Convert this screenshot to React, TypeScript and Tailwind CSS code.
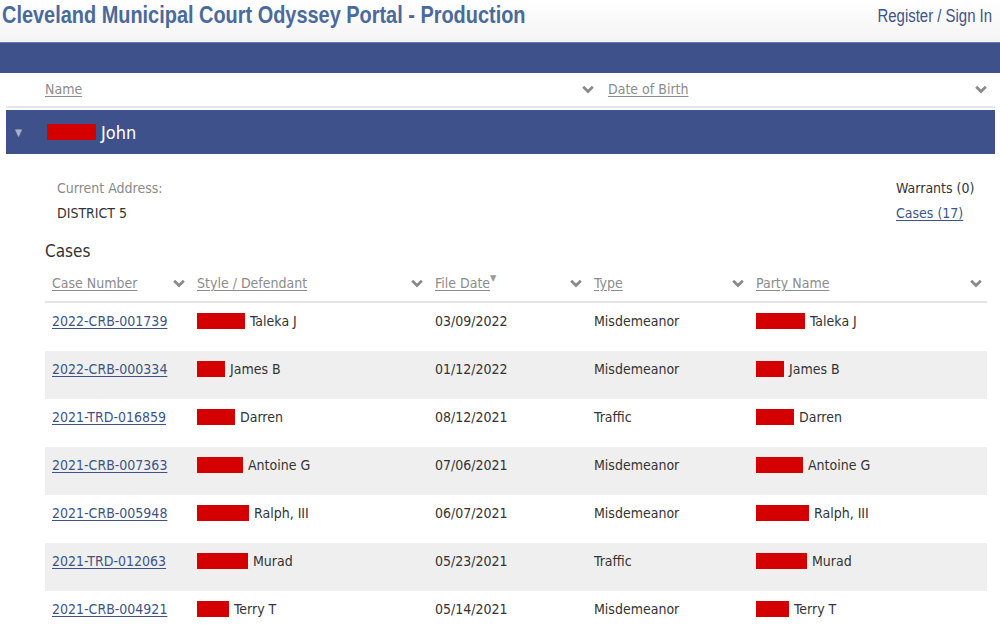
import React from 'react';

const narrow = { fontFamily: '"Liberation Sans", Arial, sans-serif' };

const Chevron = () => (
  <svg width="12" height="9" viewBox="0 0 12 9" className="shrink-0">
    <path d="M1.2 1.8 L6 6.5 L10.8 1.8" fill="none" stroke="#8a8a8a" strokeWidth="2.8" />
  </svg>
);

const Redact = ({ w }: { w: number }) => (
  <span className="inline-block h-[16px] bg-[#d40000] mr-[5px] align-middle" style={{ width: w }} />
);

interface CaseRow {
  num: string;
  styleW: number;
  styleName: string;
  date: string;
  type: string;
  partyW: number;
  partyName: string;
}

const rows: CaseRow[] = [
  { num: '2022-CRB-001739', styleW: 48, styleName: 'Taleka J', date: '03/09/2022', type: 'Misdemeanor', partyW: 49, partyName: 'Taleka J' },
  { num: '2022-CRB-000334', styleW: 28, styleName: 'James B', date: '01/12/2022', type: 'Misdemeanor', partyW: 28, partyName: 'James B' },
  { num: '2021-TRD-016859', styleW: 38, styleName: 'Darren', date: '08/12/2021', type: 'Traffic', partyW: 38, partyName: 'Darren' },
  { num: '2021-CRB-007363', styleW: 46, styleName: 'Antoine G', date: '07/06/2021', type: 'Misdemeanor', partyW: 47, partyName: 'Antoine G' },
  { num: '2021-CRB-005948', styleW: 52, styleName: 'Ralph, III', date: '06/07/2021', type: 'Misdemeanor', partyW: 53, partyName: 'Ralph, III' },
  { num: '2021-TRD-012063', styleW: 51, styleName: 'Murad', date: '05/23/2021', type: 'Traffic', partyW: 51, partyName: 'Murad' },
  { num: '2021-CRB-004921', styleW: 32, styleName: 'Terry T', date: '05/14/2021', type: 'Misdemeanor', partyW: 33, partyName: 'Terry T' },
];

const cols = 'grid grid-cols-[145px_238px_159px_162px_238px]';

const HeadCell = ({ label, sort }: { label: string; sort?: boolean }) => (
  <div className="flex items-center justify-between pl-[7px] pr-[5px]">
    <span className="flex items-start">
      <span className="underline underline-offset-2 text-[#8c8c8c]">{label}</span>
      {sort && <span className="text-[9px] text-[#9a9a9a] leading-none mt-[1px]">▼</span>}
    </span>
    <Chevron />
  </div>
);

export default function App() {
  return (
    <div
      className="w-[1000px] h-[625px] overflow-hidden bg-white text-[14px] text-[#333]"
      style={{ fontFamily: '"DejaVu Sans Condensed", Tahoma, sans-serif' }}
    >
      <header className="h-[42px] flex items-start justify-between pl-[2px] pr-[8px] bg-gradient-to-b from-white to-[#f4f4f4]">
        <h1
          className="text-[24px] font-bold text-[#4a6a9c] leading-[28px] mt-[1px] whitespace-nowrap origin-left scale-x-[0.83]"
          style={narrow}
        >
          Cleveland Municipal Court Odyssey Portal - Production
        </h1>
        <a
          className="text-[18px] text-[#3e5487] leading-[22px] mt-[5px] whitespace-nowrap origin-right scale-x-[0.83]"
          style={narrow}
        >
          Register / Sign In
        </a>
      </header>
      <div className="h-[31px] bg-[#3f518b] border-t border-[#6b7ba8]" />

      <div className="px-[6px] pr-[5px]">
        <div className="h-[35px] flex items-center border-b-[2px] border-[#e3e6ee] text-[14px]">
          <div className="w-[592px] flex items-center justify-between pl-[39px] pr-[4px]">
            <span className="underline underline-offset-2 text-[#8c8c8c]">Name</span>
            <Chevron />
          </div>
          <div className="flex-1 flex items-center justify-between pl-[10px] pr-[8px]">
            <span className="underline underline-offset-2 text-[#8c8c8c]">Date of Birth</span>
            <Chevron />
          </div>
        </div>

        <div className="mt-[2px] h-[44px] bg-[#3f518b] flex items-center text-white">
          <span className="ml-[9px] text-[10px] text-[#a9b1c9] w-[32px]">▼</span>
          <Redact w={49} />
          <span className="text-[18px]">John</span>
        </div>

        <div className="flex justify-between pl-[51px] pt-[22px]">
          <div className="leading-[25px]">
            <div className="text-[#8a8a8a]">Current Address:</div>
            <div>DISTRICT 5</div>
          </div>
          <div className="leading-[25px] w-[99px] whitespace-nowrap">
            <div>Warrants (0)</div>
            <a className="underline underline-offset-2 text-[#3e5487]">Cases (17)</a>
          </div>
        </div>

        <div className="pl-[39px] pr-[8px]">
          <div className="text-[17px] mt-[13px] leading-[24px]">Cases</div>
          <div className={`${cols} h-[33px] items-center pb-[4px] border-b-[2px] border-[#e4e4e4] mt-[7px]`}>
            <HeadCell label="Case Number" />
            <HeadCell label="Style / Defendant" />
            <HeadCell label="File Date" sort />
            <HeadCell label="Type" />
            <HeadCell label="Party Name" />
          </div>
          {rows.map((r, i) => (
            <div
              key={r.num}
              className={`${cols} h-[48px] items-start pt-[8px] leading-[20px] ${i % 2 === 1 ? 'bg-[#efefef]' : 'bg-white'}`}
            >
              <div className="pl-[7px]">
                <a className="underline underline-offset-2 text-[#3e5487]">{r.num}</a>
              </div>
              <div className="pl-[7px] flex items-center"><Redact w={r.styleW} />{r.styleName}</div>
              <div className="pl-[7px]">{r.date}</div>
              <div className="pl-[7px]">{r.type}</div>
              <div className="pl-[7px] flex items-center"><Redact w={r.partyW} />{r.partyName}</div>
            </div>
          ))}
        </div>
      </div>
    </div>
  );
}
